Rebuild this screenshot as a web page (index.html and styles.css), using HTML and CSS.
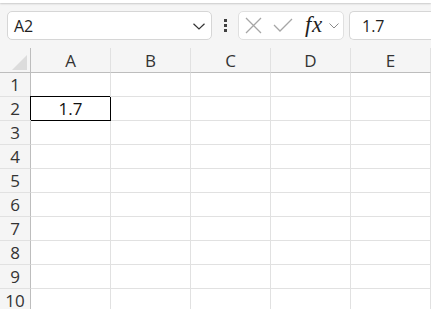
FILE: index.html
```html
<!DOCTYPE html>
<html>
<head>
<meta charset="utf-8">
<link rel="stylesheet" href="styles.css">
</head>
<body>
<div class="app">
  <div class="topbar"></div>
  <div class="formula-bar">
    <div class="namebox">
      <span class="name">A2</span>
      <svg class="chev" width="12" height="7" viewBox="0 0 12 7"><path d="M0.5 0.8 L6 6 L11.5 0.8" fill="none" stroke="#333" stroke-width="1.2"/></svg>
    </div>
    <div class="dots">
      <span></span><span></span><span></span>
    </div>
    <div class="fxbox">
      <svg class="icon-x" width="17" height="17" viewBox="0 0 17 17"><path d="M1 1 L16 16 M16 1 L1 16" stroke="#a6a6a6" stroke-width="1.3" fill="none"/></svg>
      <svg class="icon-check" width="20" height="14" viewBox="0 0 20 14"><path d="M1 7 L7 13 L19 1" stroke="#a6a6a6" stroke-width="1.3" fill="none"/></svg>
      <span class="fx">fx</span>
      <svg class="chev-small" width="10" height="6" viewBox="0 0 10 6"><path d="M0.5 0.5 L5 5 L9.5 0.5" fill="none" stroke="#8a8a8a" stroke-width="1"/></svg>
    </div>
    <div class="input">1.7</div>
  </div>
  <div class="sheet">
    <div class="corner"><span class="tri"></span></div>
    <div class="colh">A</div><div class="colh">B</div><div class="colh">C</div><div class="colh">D</div><div class="colh">E</div>

    <div class="rowh">1</div><div class="cell"></div><div class="cell"></div><div class="cell"></div><div class="cell"></div><div class="cell"></div>
    <div class="rowh">2</div><div class="cell selected">1.7</div><div class="cell"></div><div class="cell"></div><div class="cell"></div><div class="cell"></div>
    <div class="rowh">3</div><div class="cell"></div><div class="cell"></div><div class="cell"></div><div class="cell"></div><div class="cell"></div>
    <div class="rowh">4</div><div class="cell"></div><div class="cell"></div><div class="cell"></div><div class="cell"></div><div class="cell"></div>
    <div class="rowh">5</div><div class="cell"></div><div class="cell"></div><div class="cell"></div><div class="cell"></div><div class="cell"></div>
    <div class="rowh">6</div><div class="cell"></div><div class="cell"></div><div class="cell"></div><div class="cell"></div><div class="cell"></div>
    <div class="rowh">7</div><div class="cell"></div><div class="cell"></div><div class="cell"></div><div class="cell"></div><div class="cell"></div>
    <div class="rowh">8</div><div class="cell"></div><div class="cell"></div><div class="cell"></div><div class="cell"></div><div class="cell"></div>
    <div class="rowh">9</div><div class="cell"></div><div class="cell"></div><div class="cell"></div><div class="cell"></div><div class="cell"></div>
    <div class="rowh">10</div><div class="cell"></div><div class="cell"></div><div class="cell"></div><div class="cell"></div><div class="cell"></div>
  </div>
</div>
</body>
</html>
```

FILE: styles.css
```css
html, body {
  margin: 0;
  padding: 0;
  background: #ffffff;
  overflow: hidden;
}
.app {
  width: 431px;
  height: 309px;
  overflow: hidden;
  background: #f5f5f5;
  font-family: "Open Sans", "Noto Sans", sans-serif;
  color: #1f1f1f;
}
.topbar {
  height: 3px;
  background: #ffffff;
  box-shadow: 0 1px 2px rgba(0,0,0,0.18);
}
.formula-bar {
  display: flex;
  align-items: center;
  height: 29px;
  margin-top: 8px;
  padding-left: 7px;
}
.namebox {
  box-sizing: border-box;
  width: 205px;
  height: 29px;
  background: #fff;
  border: 1px solid #d6d6d6;
  border-radius: 5px;
  display: flex;
  align-items: center;
  justify-content: space-between;
  padding: 0 6px 0 6px;
}
.name {
  font-size: 16px;
  line-height: 1;
}
.chev { margin-top: 1px; }
.dots {
  width: 26px;
  display: flex;
  flex-direction: column;
  align-items: center;
  gap: 2px;
}
.dots span {
  width: 3px;
  height: 3px;
  background: #404040;
}
.fxbox {
  box-sizing: border-box;
  width: 106px;
  height: 29px;
  background: #fff;
  border: 1px solid #e0e0e0;
  border-radius: 5px;
  display: flex;
  align-items: center;
  padding-left: 6px;
}
.icon-x { margin-right: 11px; }
.icon-check { margin-right: 12px; margin-top: -1px; }
.fx {
  font-family: "Liberation Serif", "DejaVu Serif", serif;
  font-style: italic;
  font-size: 23px;
  line-height: 1;
  color: #1f1f1f;
  margin-top: -3px;
  margin-right: 6px;
  letter-spacing: 0.5px;
}
.chev-small { margin-top: 1px; }
.input {
  box-sizing: border-box;
  margin-left: 5px;
  flex: 1;
  height: 29px;
  background: #fff;
  border: 1px solid #d6d6d6;
  border-right: none;
  border-radius: 5px 0 0 5px;
  display: flex;
  align-items: center;
  padding-left: 12px;
  font-size: 16px;
}
.sheet {
  margin-top: 8px;
  display: grid;
  grid-template-columns: 31px repeat(5, 80px);
  grid-template-rows: 25px repeat(10, 24px);
  background: #fff;
}
.corner, .colh, .rowh, .cell {
  box-sizing: border-box;
  border-right: 1px solid #e1e1e1;
  border-bottom: 1px solid #e1e1e1;
}
.corner {
  background: #f5f5f5;
  border-right-color: #bdbdbd;
  border-bottom-color: #bdbdbd;
  position: relative;
}
.tri {
  position: absolute;
  right: 3px;
  bottom: 2px;
  width: 0;
  height: 0;
  border-left: 15px solid transparent;
  border-bottom: 15px solid #dcdcdc;
}
.colh {
  background: #f5f5f5;
  border-bottom-color: #bdbdbd;
  display: flex;
  align-items: center;
  justify-content: center;
  font-size: 17px;
  color: #333;
}
.rowh {
  background: #f5f5f5;
  border-right-color: #bdbdbd;
  display: flex;
  align-items: center;
  justify-content: center;
  font-size: 17px;
  color: #333;
}
.cell {
  background: #fff;
}
.selected {
  position: relative;
  border-right-color: #000;
  border-bottom-color: #000;
  box-shadow: -1px -1px 0 0 #000;
  display: flex;
  align-items: center;
  justify-content: center;
  font-size: 17px;
  color: #111;
}
```
